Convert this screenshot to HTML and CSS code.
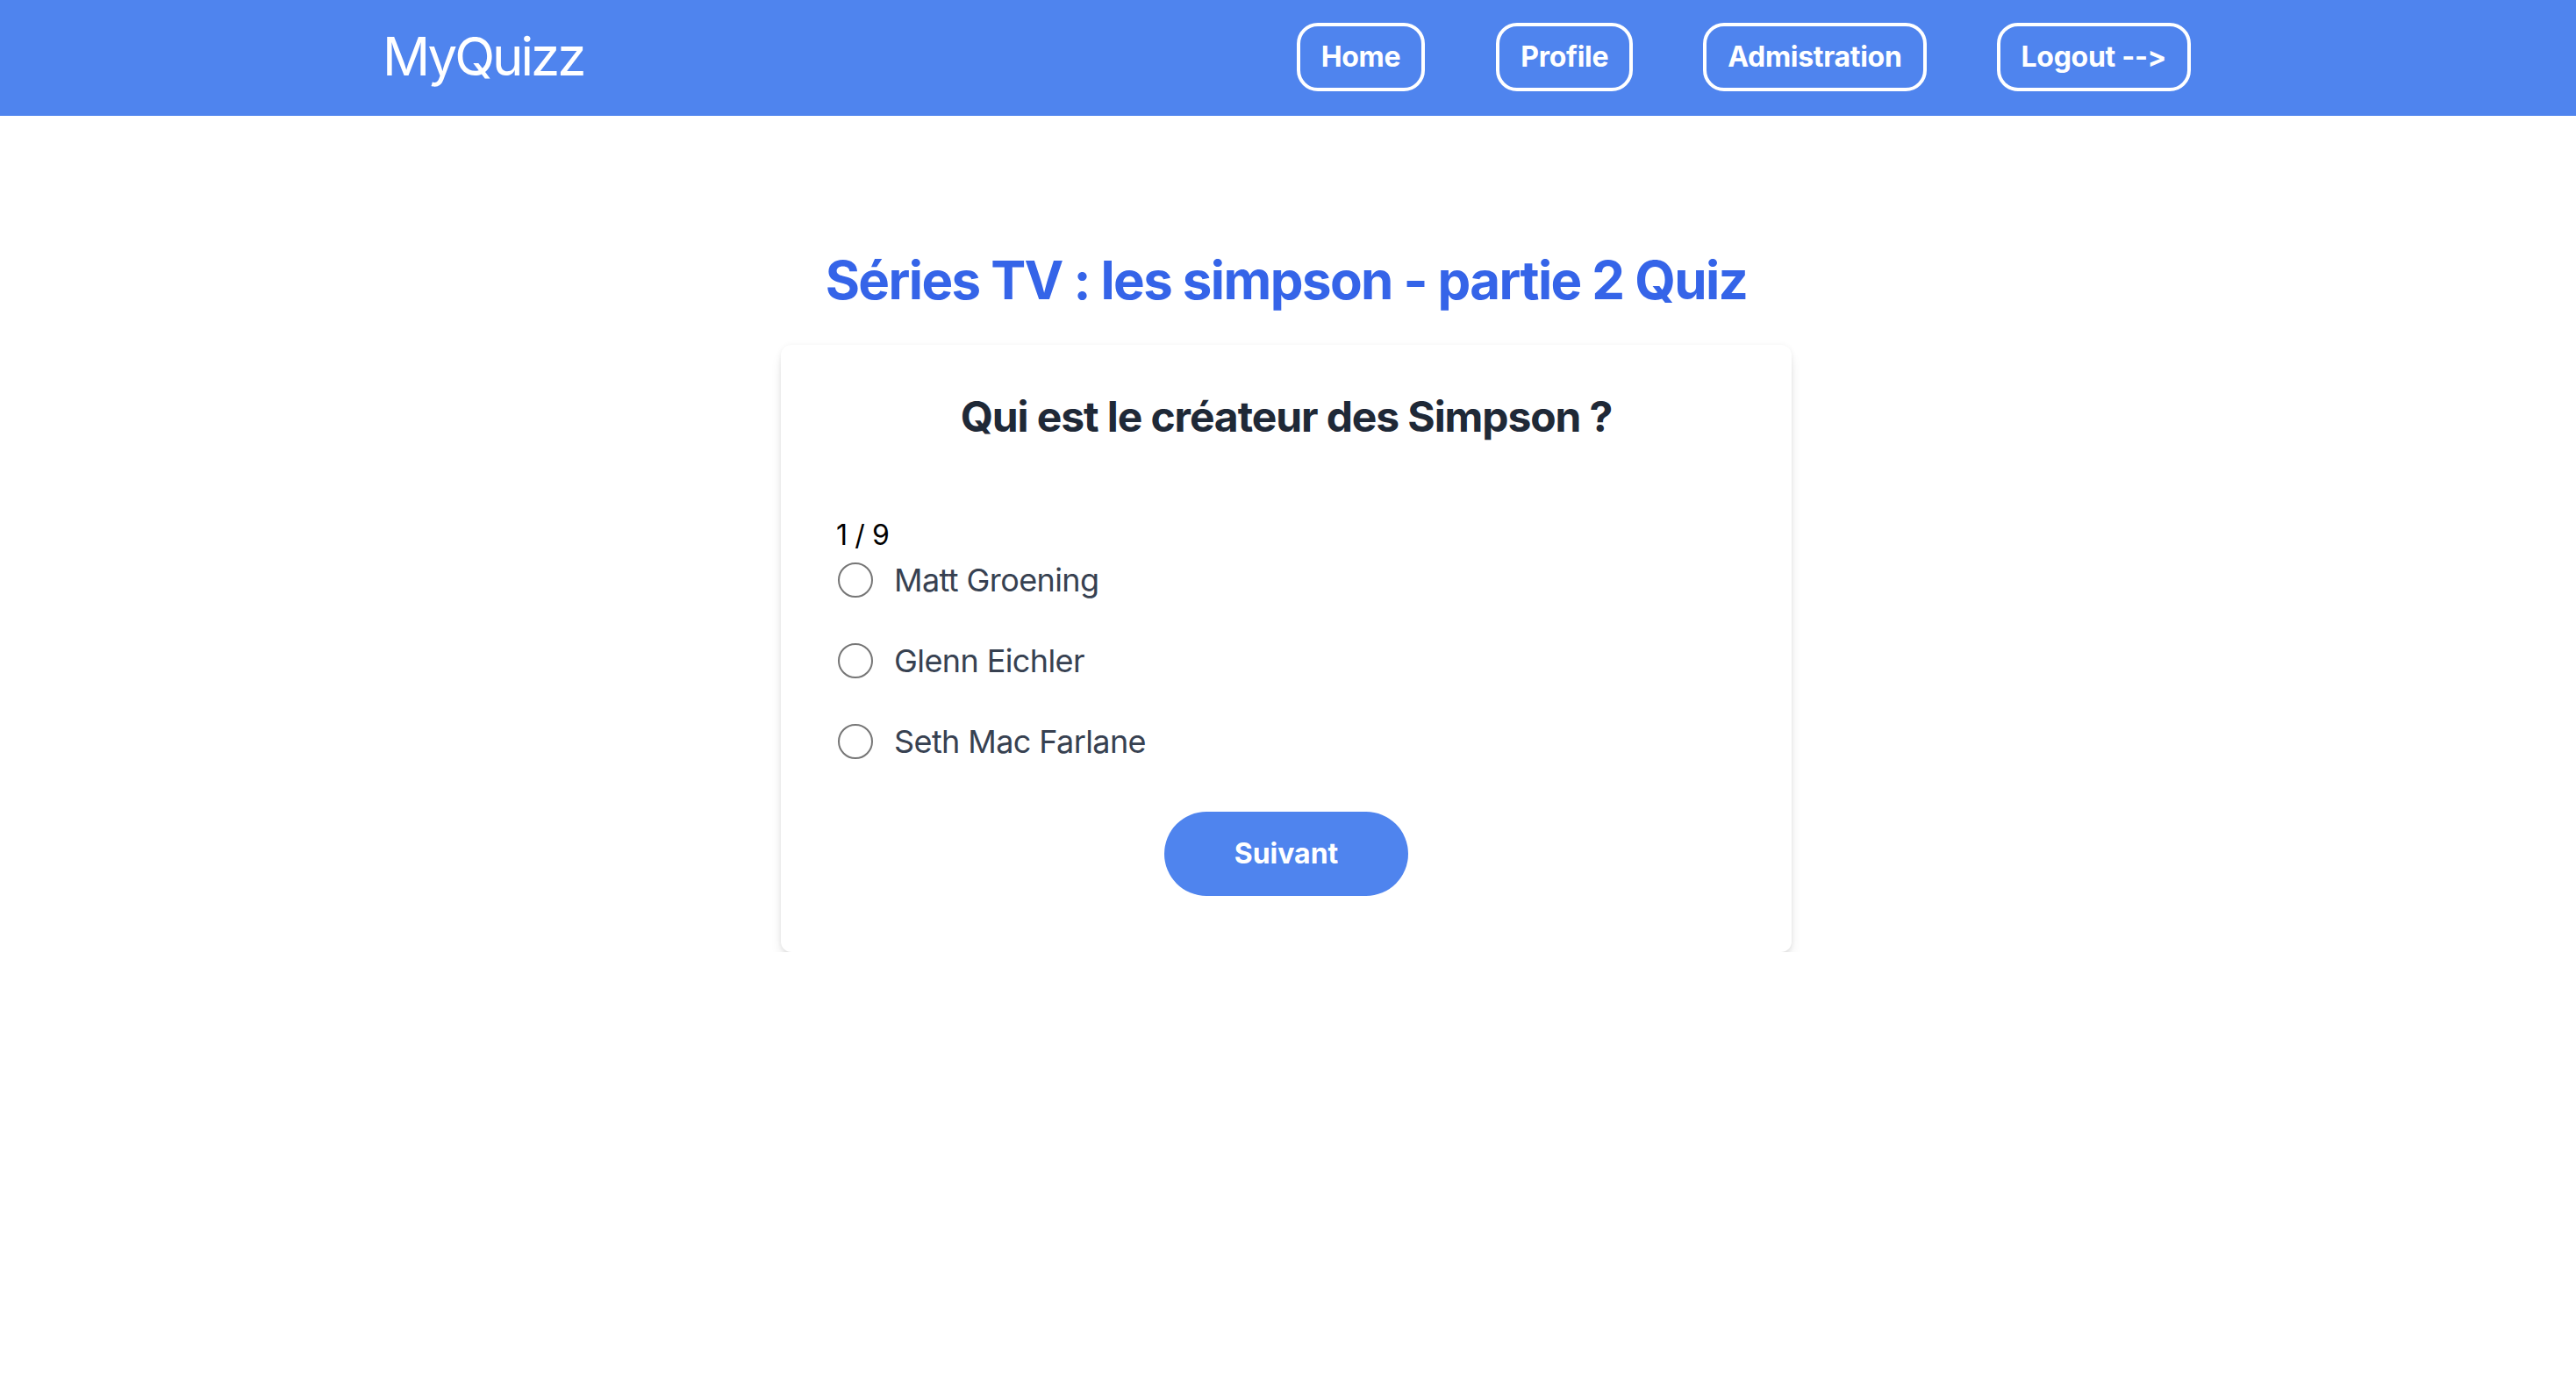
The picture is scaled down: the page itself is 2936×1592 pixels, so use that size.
FILE: index.html
```html
<!DOCTYPE html>
<html lang="fr">
<head>
<meta charset="utf-8">
<title>MyQuizz</title>
<link rel="stylesheet" href="styles.css">
</head>
<body>
<header class="navbar">
  <div class="nav-inner">
    <a class="logo" href="#">MyQuizz</a>
    <nav class="nav-links">
      <a class="nav-btn" href="#">Home</a>
      <a class="nav-btn" href="#">Profile</a>
      <a class="nav-btn" href="#">Admistration</a>
      <a class="nav-btn" href="#">Logout --&gt;</a>
    </nav>
  </div>
</header>
<main class="main">
  <h1 class="quiz-title">Séries TV : les simpson - partie 2 Quiz</h1>
  <section class="card">
    <h2 class="question">Qui est le créateur des Simpson ?</h2>
    <form class="answers">
      <div class="counter">1 / 9</div>
      <label class="option"><input type="radio" name="a" class="radio"><span>Matt Groening</span></label>
      <label class="option"><input type="radio" name="a" class="radio"><span>Glenn Eichler</span></label>
      <label class="option"><input type="radio" name="a" class="radio"><span>Seth Mac Farlane</span></label>
      <div class="actions"><button type="button" class="next-btn">Suivant</button></div>
    </form>
  </section>
</main>
</body>
</html>
```
FILE: styles.css
```css
* { box-sizing: border-box; }
html, body { margin: 0; padding: 0; }
body {
  font-family: Inter, "Noto Sans", "Liberation Sans", sans-serif;
  font-feature-settings: "calt" 0, "liga" 0;
  font-variant-ligatures: none;
  background: #ffffff;
  color: #000;
}
.navbar {
  background: #4f84ee;
  height: 132px;
}
.nav-inner {
  max-width: 2064px;
  height: 100%;
  margin: 0 auto;
  display: flex;
  align-items: center;
  justify-content: space-between;
}
.logo {
  color: #fff;
  font-size: 60px;
  line-height: 72px;
  text-decoration: none;
  font-weight: 400;
  letter-spacing: -3px;
  margin-top: -4px;
}
.nav-links {
  display: flex;
  align-items: center;
  gap: 80px;
  margin-right: 3px;
}
.nav-btn {
  display: block;
  color: #fff;
  text-decoration: none;
  font-weight: 700;
  font-size: 32px;
  line-height: 48px;
  padding: 11px 24px;
  border: 4px solid #fff;
  border-radius: 24px;
  margin-top: -2px;
  letter-spacing: -0.3px;
}
.nav-btn:first-child { margin-right: 1px; }
.main {
  display: flex;
  flex-direction: column;
  align-items: center;
  padding-top: 151px;
  padding-right: 4px;
}
.quiz-title {
  margin: 0;
  font-size: 60px;
  line-height: 72px;
  font-weight: 700;
  color: #3564e8;
  letter-spacing: -1.6px;
}
.card {
  margin-top: 38px;
  width: 1152px;
  background: #fff;
  border-radius: 12px;
  box-shadow: 0 10px 16px -4px rgba(0,0,0,0.14), 0 4px 8px -4px rgba(0,0,0,0.10), 0 0 6px rgba(0,0,0,0.05);
  padding: 50px 64px 64px;
}
.question {
  margin: 0;
  text-align: center;
  font-size: 48px;
  line-height: 64px;
  font-weight: 700;
  color: #1f2937;
  letter-spacing: -1.1px;
}
.answers {
  margin-top: 79px;
  display: flex;
  flex-direction: column;
}
.counter {
  font-size: 32px;
  line-height: 48px;
  color: #000;
  letter-spacing: -0.4px;
  margin-left: -1px;
}
.option {
  display: flex;
  align-items: center;
  height: 54px;
  font-size: 36px;
  color: #374151;
  margin-bottom: 38px;
  letter-spacing: -0.6px;
}
.option:last-of-type { margin-bottom: 0; }
.radio {
  appearance: none;
  -webkit-appearance: none;
  margin: 0 24px 0 1px;
  width: 40px;
  height: 40px;
  border: 2px solid #767676;
  border-radius: 50%;
  background: #fff;
  flex: none;
}
.actions {
  display: flex;
  justify-content: center;
  margin-top: 53px;
}
.next-btn {
  font-family: inherit;
  background: #4f84ee;
  color: #fff;
  border: none;
  border-radius: 48px;
  font-size: 32px;
  line-height: 48px;
  font-weight: 700;
  padding: 24px 80px;
  cursor: pointer;
}
```
